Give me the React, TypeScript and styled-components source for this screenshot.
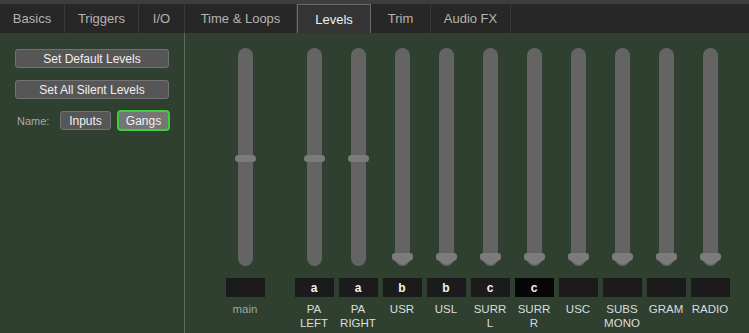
import styled, { createGlobalStyle } from 'styled-components';

const Global = createGlobalStyle`
  html, body { margin: 0; padding: 0; background: #2f4031; }
  body { font-family: "Liberation Sans", Arial, sans-serif; }
`;

const Page = styled.div`
  width: 749px;
  height: 333px;
  display: flex;
  flex-direction: column;
  overflow: hidden;
  background: #2f4031;
`;

const TopStrip = styled.div`
  height: 4px;
  background: #3e3e3e;
`;

const TabBar = styled.div`
  height: 29px;
  display: flex;
  background: #272727;
`;

const Tab = styled.div<{ $w: number; $active?: boolean }>`
  width: ${p => p.$w}px;
  box-sizing: border-box;
  display: flex;
  align-items: center;
  justify-content: center;
  font-size: 13px;
  color: ${p => (p.$active ? '#f0f0f0' : '#b4b4b4')};
  background: ${p => (p.$active ? '#343434' : 'transparent')};
  border-right: 1px solid ${p => (p.$active ? '#6a6a6a' : '#3a3a3a')};
  border-left: ${p => (p.$active ? '1px solid #6a6a6a' : 'none')};
  border-top: ${p => (p.$active ? '1px solid #6a6a6a' : 'none')};
`;

const Body = styled.div`
  flex: 1;
  display: flex;
`;

const Side = styled.div`
  width: 185px;
  border-right: 1px solid #5e6a5f;
  padding: 16px 0 0 15px;
  box-sizing: border-box;
  display: flex;
  flex-direction: column;
  gap: 12px;
`;

const Btn = styled.div<{ $w?: number; $on?: boolean }>`
  width: ${p => p.$w ?? 154}px;
  height: 19px;
  box-sizing: border-box;
  border-radius: 3px;
  background: ${p => (p.$on ? '#757575' : '#565656')};
  border: 1px solid ${p => (p.$on ? '#3fcf3a' : '#727272')};
  box-shadow: ${p => (p.$on ? '0 0 0 1px #3fcf3a' : 'none')};
  color: #f0f0f0;
  font-size: 12px;
  display: flex;
  align-items: center;
  justify-content: center;
`;

const NameRow = styled.div`
  display: flex;
  align-items: center;
  gap: 7px;
`;

const NameLabel = styled.span`
  font-size: 11px;
  color: #a8aca8;
  margin-left: 2px;
  width: 36px;
`;

const Mixer = styled.div`
  flex: 1;
  display: flex;
  padding: 15px 0 0 38px;
`;

const Channel = styled.div<{ $gapAfter?: number }>`
  width: 44px;
  margin-right: ${p => p.$gapAfter ?? 0}px;
  display: flex;
  flex-direction: column;
  align-items: center;
`;

const Track = styled.div`
  position: relative;
  width: 15px;
  height: 218px;
  border-radius: 8px;
  background: #646464;
`;

const MidThumb = styled.div`
  position: absolute;
  left: -3px;
  top: 107px;
  width: 21px;
  height: 7px;
  border-radius: 4px;
  background: #7b7b7b;
`;

const BottomThumb = styled.svg`
  position: absolute;
  left: -3px;
  bottom: 1px;
`;

const ValueBox = styled.div<{ $dark?: boolean }>`
  margin-top: 12px;
  width: 39px;
  height: 19px;
  background: ${p => (p.$dark ? '#060606' : '#1b1b1b')};
  color: #f2f2f2;
  font-size: 12px;
  font-weight: bold;
  display: flex;
  align-items: center;
  justify-content: center;
`;

const Label = styled.div<{ $dim?: boolean }>`
  margin-top: 5px;
  font-size: 11.5px;
  line-height: 14px;
  text-align: center;
  color: ${p => (p.$dim ? '#a0a6a0' : '#dcdcdc')};
  white-space: pre;
`;

const tabs = [
  { t: 'Basics', w: 65 },
  { t: 'Triggers', w: 74 },
  { t: 'I/O', w: 46 },
  { t: 'Time & Loops', w: 112 },
  { t: 'Levels', w: 74, active: true },
  { t: 'Trim', w: 60 },
  { t: 'Audio FX', w: 80 },
];

const channels = [
  { name: 'main', gang: '', mid: true, dim: true, gap: 25 },
  { name: 'PA\nLEFT', gang: 'a', mid: true },
  { name: 'PA\nRIGHT', gang: 'a', mid: true },
  { name: 'USR', gang: 'b' },
  { name: 'USL', gang: 'b' },
  { name: 'SURR\nL', gang: 'c' },
  { name: 'SURR\nR', gang: 'c', dark: true },
  { name: 'USC', gang: '' },
  { name: 'SUBS\nMONO', gang: '' },
  { name: 'GRAM', gang: '' },
  { name: 'RADIO', gang: '' },
];

const App = () => {
  return (
    <Page>
      <Global />
      <TopStrip />
      <TabBar>
        {tabs.map(tab => (
          <Tab key={tab.t} $w={tab.w} $active={tab.active}>{tab.t}</Tab>
        ))}
      </TabBar>
      <Body>
        <Side>
          <Btn>Set Default Levels</Btn>
          <Btn>Set All Silent Levels</Btn>
          <NameRow>
            <NameLabel>Name:</NameLabel>
            <Btn $w={51}>Inputs</Btn>
            <Btn $w={51} $on>Gangs</Btn>
          </NameRow>
        </Side>
        <Mixer>
          {channels.map(ch => (
            <Channel key={ch.name} $gapAfter={ch.gap}>
              <Track>
                {ch.mid ? (
                  <MidThumb />
                ) : (
                  <BottomThumb width="21" height="12" viewBox="0 0 21 12">
                    <path d="M3 0 H18 A3 3 0 0 1 21 3 V5 Q21 7 18 8 L12 11.5 Q10.5 12 9 11.5 L3 8 Q0 7 0 5 V3 A3 3 0 0 1 3 0 Z" fill="#7b7b7b" />
                  </BottomThumb>
                )}
              </Track>
              <ValueBox $dark={ch.dark}>{ch.gang}</ValueBox>
              <Label $dim={ch.dim}>{ch.name}</Label>
            </Channel>
          ))}
        </Mixer>
      </Body>
    </Page>
  );
};

export default App;
